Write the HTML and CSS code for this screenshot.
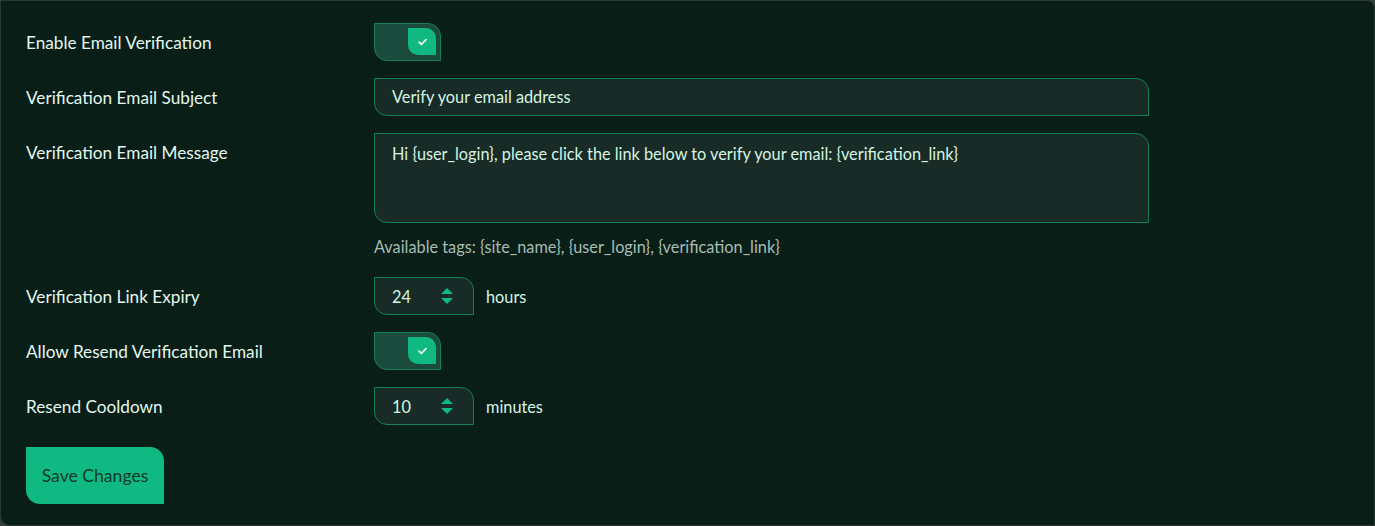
FILE: index.html
```html
<!DOCTYPE html>
<html>
<head>
<meta charset="utf-8">
<link rel="stylesheet" href="styles.css">
</head>
<body>
<div class="panel">
  <div class="form">
    <div class="label">Enable Email Verification</div>
    <div class="control">
      <label class="toggle"><span class="knob"><svg width="9" height="8" viewBox="0 0 9 8"><path d="M1 4.2 L3.4 6.4 L8 1.6" fill="none" stroke="#fff" stroke-width="1.6" stroke-linecap="round" stroke-linejoin="round"/></svg></span></label>
    </div>

    <div class="label">Verification Email Subject</div>
    <div class="control">
      <div class="input">Verify your email address</div>
    </div>

    <div class="label">Verification Email Message</div>
    <div class="control">
      <div class="textarea">Hi {user_login}, please click the link below to verify your email: {verification_link}</div>
      <div class="hint">Available tags: {site_name}, {user_login}, {verification_link}</div>
    </div>

    <div class="label">Verification Link Expiry</div>
    <div class="control row">
      <div class="number"><span>24</span><span class="spin"><i class="up"></i><i class="down"></i></span></div>
      <span class="unit">hours</span>
    </div>

    <div class="label">Allow Resend Verification Email</div>
    <div class="control">
      <label class="toggle"><span class="knob"><svg width="9" height="8" viewBox="0 0 9 8"><path d="M1 4.2 L3.4 6.4 L8 1.6" fill="none" stroke="#fff" stroke-width="1.6" stroke-linecap="round" stroke-linejoin="round"/></svg></span></label>
    </div>

    <div class="label">Resend Cooldown</div>
    <div class="control row">
      <div class="number"><span>10</span><span class="spin"><i class="up"></i><i class="down"></i></span></div>
      <span class="unit">minutes</span>
    </div>
  </div>
  <button class="save">Save Changes</button>
</div>
</body>
</html>
```
FILE: styles.css
```css
html, body {
  margin: 0;
  padding: 0;
  background: #35403c;
}
body {
  font-family: Lato, "Open Sans", sans-serif;
  font-size: 16px;
}
.panel {
  box-sizing: border-box;
  width: 1375px;
  height: 526px;
  background: #0a1e18;
  border: 1px solid #2b3833;
  border-radius: 2px 8px 0 10px;
  padding: 22px 25px 21px 25px;
}
.form {
  display: grid;
  grid-template-columns: 348px 775px;
  row-gap: 17px;
}
.label {
  color: #e2f7ee;
  font-size: 17.2px;
  line-height: 20px;
  padding-top: 10px;
}
.control {
  display: flex;
  flex-direction: column;
  align-items: flex-start;
  font-size: 16.3px;
}
.control.row {
  flex-direction: row;
  align-items: center;
}
.toggle {
  box-sizing: border-box;
  width: 67px;
  height: 38px;
  background: #1a4b3c;
  border: 1px solid #138059;
  border-radius: 0 13px 0 13px;
  display: flex;
  justify-content: flex-end;
  align-items: flex-start;
  padding: 4px 4px 0 0;
}
.knob {
  width: 28px;
  height: 27px;
  background: #10b981;
  border-radius: 0 10px 0 10px;
  display: flex;
  align-items: center;
  justify-content: center;
}
.input, .textarea, .number {
  box-sizing: border-box;
  background: #182b26;
  border: 1px solid #12805a;
  color: #d4f5e4;
  border-radius: 0 13px 0 13px;
}
.input {
  width: 775px;
  height: 38px;
  line-height: 36px;
  padding: 0 17px;
}
.textarea {
  width: 775px;
  height: 90px;
  padding: 10px 17px;
  line-height: 20px;
}
.hint {
  color: #a5bdb3;
  font-size: 16.3px;
  line-height: 20px;
  margin: 14px 0 3px 0;
}
.number {
  width: 100px;
  height: 38px;
  display: flex;
  align-items: center;
  padding-left: 17px;
}
.number span:first-child {
  width: 47px;
}
.spin {
  display: flex;
  flex-direction: column;
  gap: 4px;
  margin-left: 2px;
}
.spin i {
  display: block;
  width: 0;
  height: 0;
  border-left: 6px solid transparent;
  border-right: 6px solid transparent;
}
.spin .up {
  border-bottom: 6px solid #10b981;
}
.spin .down {
  border-top: 6px solid #10b981;
}
.unit {
  color: #d4f5e4;
  margin-left: 12px;
}
.save {
  display: block;
  margin-top: 22px;
  width: 138px;
  height: 57px;
  padding: 0;
  background: #10b981;
  color: #0d3a2c;
  border: none;
  border-radius: 0 14px 0 14px;
  font-family: Lato, "Open Sans", sans-serif;
  font-size: 17.6px;
}
```
